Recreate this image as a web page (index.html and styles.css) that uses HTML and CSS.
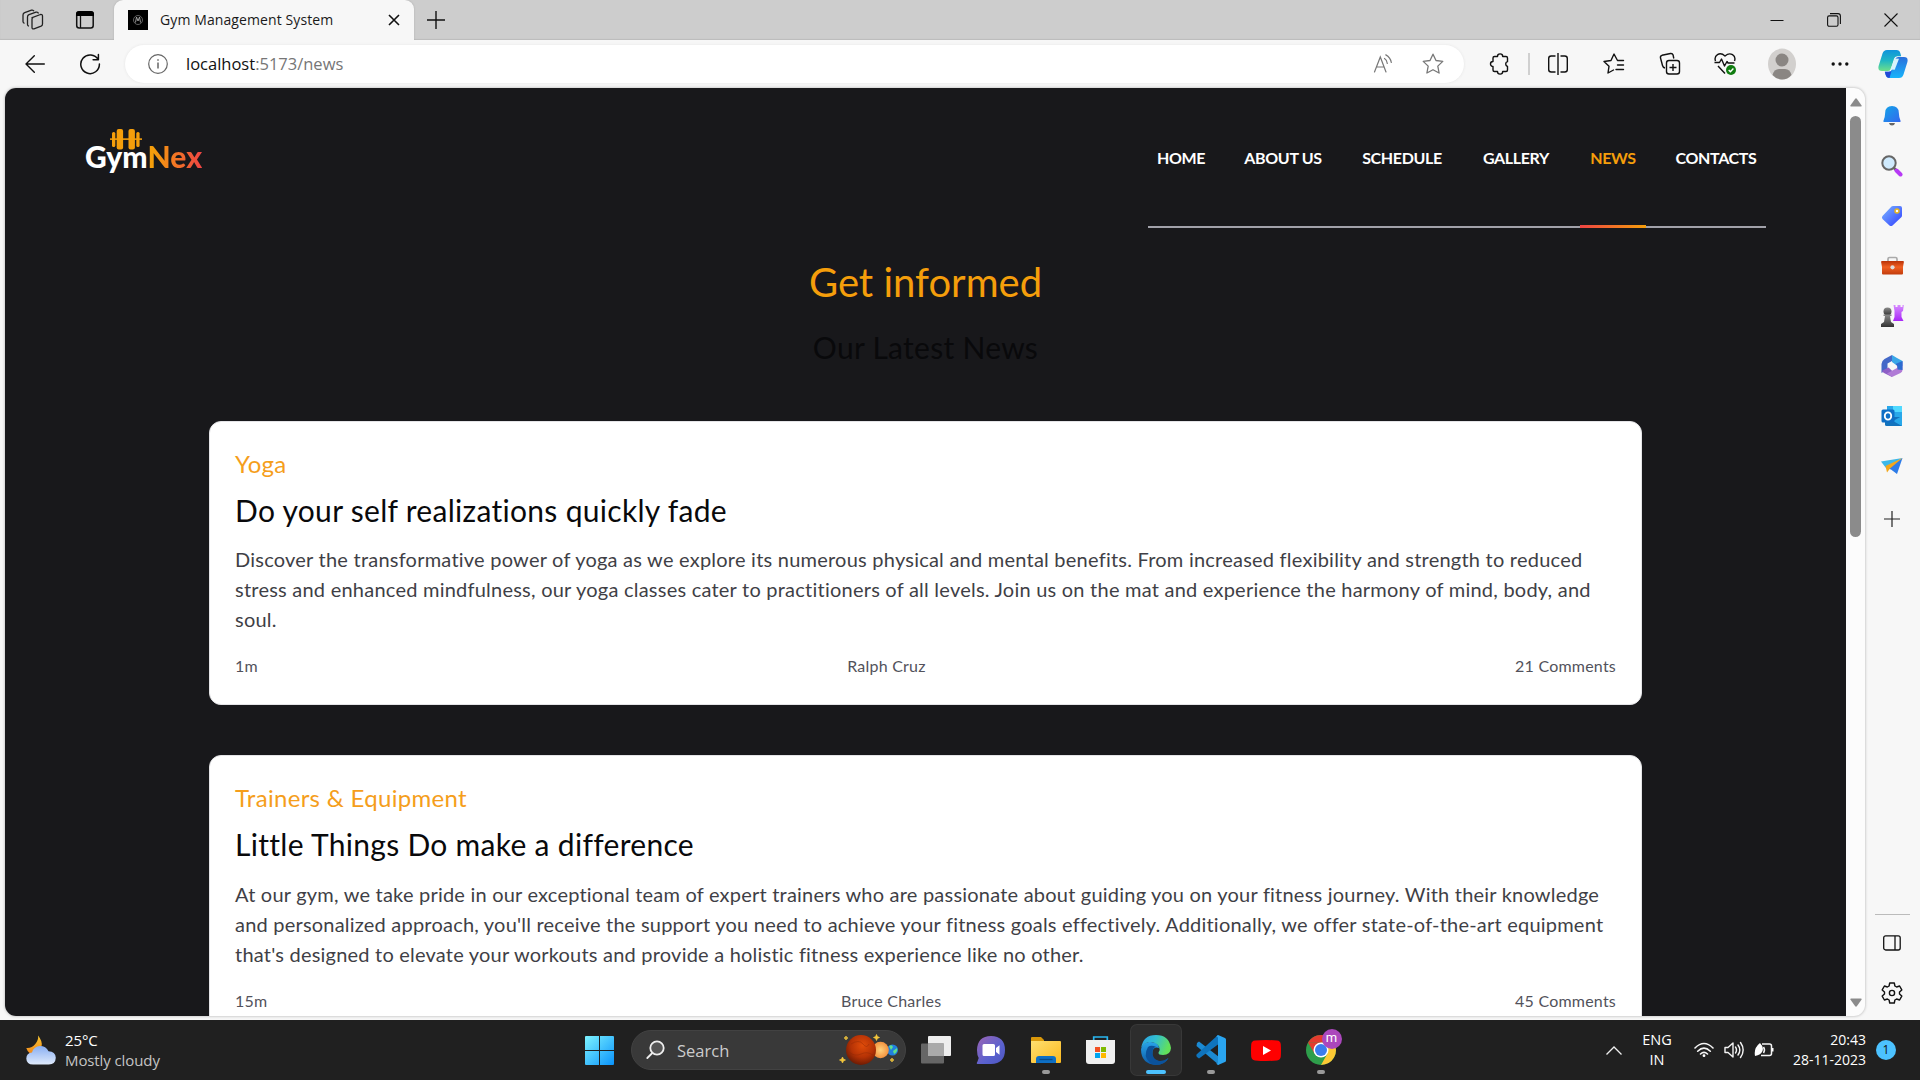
FILE: index.html
```html
<!DOCTYPE html>
<html lang="en">
<head>
<meta charset="utf-8">
<title>Gym Management System</title>
<link rel="stylesheet" href="styles.css">
</head>
<body>
<svg class="defs" width="0" height="0" aria-hidden="true">
  <defs>
    <linearGradient id="blue" x1="0" y1="0" x2="1" y2="1"><stop offset="0" stop-color="#12a5e8"/><stop offset="1" stop-color="#3467ee"/></linearGradient>
    <linearGradient id="win" x1="0" y1="0" x2="1" y2="1"><stop offset="0" stop-color="#7df3ff"/><stop offset="1" stop-color="#0a93fb"/></linearGradient>
    <linearGradient id="tag" x1="0" y1="0" x2="1" y2="1"><stop offset="0" stop-color="#7cb8ff"/><stop offset="1" stop-color="#2f3cff"/></linearGradient>
    <linearGradient id="purple" x1="0" y1="0" x2="0" y2="1"><stop offset="0" stop-color="#d68cff"/><stop offset="1" stop-color="#a826f7"/></linearGradient>
    <linearGradient id="grey" x1="0" y1="0" x2="0" y2="1"><stop offset="0" stop-color="#8b8b8b"/><stop offset="1" stop-color="#333"/></linearGradient>
    <linearGradient id="brick" x1="0" y1="0" x2="0" y2="1"><stop offset="0" stop-color="#b93208"/><stop offset=".45" stop-color="#f06022"/><stop offset="1" stop-color="#c23c0c"/></linearGradient>
    <linearGradient id="teal" x1="0" y1="0" x2="0" y2="1"><stop offset="0" stop-color="#0f93dc"/><stop offset=".5" stop-color="#1fb6c4"/><stop offset="1" stop-color="#6ee08a"/></linearGradient>
    <linearGradient id="azure" x1="0" y1="0" x2="0" y2="1"><stop offset="0" stop-color="#2a6fdb"/><stop offset="1" stop-color="#18b4fb"/></linearGradient>
    <linearGradient id="edgetop" x1="0" y1="0" x2="1" y2=".3"><stop offset="0" stop-color="#2a9fe8"/><stop offset=".5" stop-color="#32bfd0"/><stop offset="1" stop-color="#62e05a"/></linearGradient>
    <linearGradient id="edgebot" x1="0" y1="0" x2="0" y2="1"><stop offset="0" stop-color="#28a4ea"/><stop offset="1" stop-color="#0c59a4"/></linearGradient>
    <linearGradient id="folder" x1="0" y1="0" x2="1" y2="1"><stop offset="0" stop-color="#ffdf70"/><stop offset="1" stop-color="#fbb91e"/></linearGradient>
    <linearGradient id="chat" x1="0" y1="0" x2="1" y2="1"><stop offset="0" stop-color="#9c64b4"/><stop offset=".6" stop-color="#5a62cf"/><stop offset="1" stop-color="#4d55c0"/></linearGradient>
    <linearGradient id="cloud" x1="0" y1="0" x2="0" y2="1"><stop offset="0" stop-color="#88aef2"/><stop offset="1" stop-color="#dfeafb"/></linearGradient>
    <linearGradient id="moon" x1="0" y1="0" x2="0" y2="1"><stop offset="0" stop-color="#f5c431"/><stop offset="1" stop-color="#f28a1c"/></linearGradient>
    <radialGradient id="mars" cx=".55" cy=".35" r=".65"><stop offset="0" stop-color="#e04c0a"/><stop offset=".6" stop-color="#b53205"/><stop offset="1" stop-color="#6e1c04"/></radialGradient>
    <radialGradient id="venus"><stop offset="0" stop-color="#ffd27c"/><stop offset="1" stop-color="#f3913e"/></radialGradient>
  </defs>
</svg>

<div class="browser">
  <header class="titlebar">
    <div class="tb-icon first"><svg width="24" height="24" viewBox="0 0 24 24" fill="none" stroke="#222" stroke-width="1.3" stroke-linejoin="round"><path d="M10.5 9.8 19.5 6.5q2-.3 2 1.6v8q0 1.500-1.400 2.100L13 20.900q-2 .4-2-1.500V11q0-1 1-1.400"/><path d="M17.500 5.500q-.5-1.800-2.500-1.300L8 6.700Q6.500 7.300 6.500 9v7.500q0 1.500 1.500 1.700"/><path d="M13 3.200q-.7-1.500-2.500-1L3.700 4.700Q2 5.300 2 7v6.500Q2 15 3.500 15.300"/></svg></div>
    <div class="tb-icon"><svg width="20" height="20" viewBox="0 0 20 20"><rect x="1.700" y="2" width="16.500" height="16" rx="2.500" fill="none" stroke="#111" stroke-width="1.500"/><path d="M1 6V4q0-3 3-3h12q3 0 3 3v2z" fill="#000"/><path d="M5.500 6v12" stroke="#111" stroke-width="1.300"/></svg></div>
    <div class="tab">
      <svg width="20" height="20" viewBox="0 0 20 20"><path d="M0 0h20v20H0z"/><circle cx="10" cy="10" r="4.500" fill="none" stroke="#777" stroke-width=".8"/><path d="M7.500 12.500 8.500 7l1.500 4 1.500-4 1 5.500" fill="none" stroke="#aaa" stroke-width=".9"/></svg>
      <span class="tab-title">Gym Management System</span>
      <svg class="tab-close" width="12" height="12" viewBox="0 0 12 12" stroke="#111" stroke-width="1.600"><path d="m1 1 10 10M11 1 1 11"/></svg>
    </div>
    <div class="newtab"><svg width="18" height="18" viewBox="0 0 18 18" stroke="#111" stroke-width="1.400"><path d="M9 0v18M0 9h18"/></svg></div>
    <div class="winbtns">
      <svg width="14" height="14" viewBox="0 0 14 14" fill="none" stroke="#111"><path d="M.5 7.500h13"/></svg>
      <svg width="14" height="14" viewBox="0 0 14 14" fill="none" stroke="#111" stroke-width="1.100"><rect x=".6" y="2.900" width="10.400" height="10.400" rx="1.500"/><path d="M3 .6h8q2.400 0 2.400 2.400v8"/></svg>
      <svg width="14" height="14" viewBox="0 0 14 14" fill="none" stroke="#111" stroke-width="1.100"><path d="m.5.5 13 13M13.500.5l-13 13"/></svg>
    </div>
  </header>

  <div class="toolbar">
    <div class="nav-btn"><svg width="20" height="18" viewBox="0 0 20 18" fill="none" stroke="#111" stroke-width="1.400" stroke-linecap="round" stroke-linejoin="round"><path d="M19.300 9H1M9.300.8 1 9l8.300 8.200"/></svg></div>
    <div class="nav-btn reload"><svg width="22" height="22" viewBox="0 0 22 22" fill="none" stroke="#111" stroke-width="1.500" stroke-linecap="round" stroke-linejoin="round"><path d="M19.200 6.700A9.300 9.300 0 1 0 20.400 11M19.400 1.500v5.300h-5.300"/></svg></div>
    <div class="omnibox">
      <svg width="20" height="20" viewBox="0 0 20 20" fill="none" stroke="#666" stroke-width="1.200"><circle cx="10" cy="10" r="9.300"/><path d="M10 8.500v6M10 5.200v1.600" stroke-width="1.500"/></svg>
      <span class="url"><b>localhost</b>:5173/news</span>
      <div class="omni-actions">
        <svg width="20" height="20" viewBox="0 0 20 20" fill="none" stroke="#777" stroke-width="1.200" stroke-linecap="round"><path d="M1.500 18 7.300 3l5.700 15M3.400 13h7.800M11.500 4.500q2.500 1.500 2.800 5M12.800.9q4.700 2.600 5.500 7.600"/></svg>
        <svg width="22" height="22" viewBox="0 0 22 22" fill="none" stroke="#777" stroke-width="1.300" stroke-linejoin="round"><path d="m11 1.200 3 6.300 6.800.9-5 4.700 1.300 6.900L11 16.700 4.900 20l1.300-6.900-5-4.700 6.800-.9z"/></svg>
      </div>
    </div>
    <div class="tools">
      <div class="tool"><svg width="22" height="24" viewBox="0 0 22 24" fill="none" stroke="#111" stroke-width="1.400" stroke-linejoin="round"><path d="M5.500 4.500h3a2.600 2.600 0 0 1 5.200 0H17q1.500 0 1.500 1.500v3.700a2.500 2.500 0 0 0 0 4.800V18q0 1.500-1.500 1.500h-3.300a2.600 2.600 0 0 1-5.200 0h-3Q4 19.500 4 18v-3.500a2.500 2.500 0 0 1 0-5V6q0-1.500 1.500-1.500z"/></svg></div>
      <i class="rule"></i>
      <div class="tool"><svg width="22" height="22" viewBox="0 0 22 22" fill="none" stroke="#111" stroke-width="1.400"><path d="M11 0v22M8.500 3H4.200Q1.700 3 1.700 5.500v11Q1.700 19 4.200 19h4.300M13.500 3h4.300q2.500 0 2.500 2.500v11q0 2.500-2.500 2.500h-4.300"/></svg></div>
      <div class="tool"><svg width="22" height="22" viewBox="0 0 22 22" fill="none" stroke="#111" stroke-width="1.400" stroke-linejoin="round" stroke-linecap="round"><path d="M20.500 7.500h-6L11 1 8 7.500l-7 1 5 4.800L5 20l5.500-3M14.500 12h6M13 16.500h7.500"/></svg></div>
      <div class="tool"><svg width="22" height="24" viewBox="0 0 22 24" fill="none" stroke="#111" stroke-width="1.400"><rect x="7.500" y="8.500" width="13" height="13.500" rx="2.500"/><path d="M14 12v7M10.500 15.500h7M6 16q-2-.4-2.500-2.500L1.500 6Q1 4 3 3.300L11.500 1.500q2-.3 2.600 1.500l.7 3.500"/></svg></div>
      <div class="tool heart"><svg width="24" height="24" viewBox="0 0 24 24" fill="none" stroke="#111" stroke-width="1.400" stroke-linejoin="round"><path d="M2.500 9Q1 5 4.500 2.700T12 4q4-3.500 7.500-1.300T21.500 9M1.500 10.500h5l2-3.500 3 7 2.500-4.500 1 1.500h6.500M5 14l7 7.500"/><circle cx="18" cy="18" r="5" fill="#107c10" stroke="none"/><path d="m15.700 18 1.700 1.700 3-3.200" stroke="#fff"/></svg></div>
      <div class="tool avatar"><svg width="28" height="32" viewBox="0 0 28 32"><ellipse cx="14" cy="16" rx="14" ry="15.500" fill="#d2d0ce"/><circle cx="14" cy="12" r="6.500" fill="#8a8683"/><path d="M4.500 27q1.500-6 6.500-6h6q5 0 6.500 6-4 4.500-9.500 4.500T4.500 27z" fill="#8a8683"/></svg></div>
      <div class="tool"><svg width="18" height="4" viewBox="0 0 18 4" fill="#111"><circle cx="2.200" cy="2" r="1.700"/><circle cx="9" cy="2" r="1.700"/><circle cx="15.800" cy="2" r="1.700"/></svg></div>
      <div class="tool copilot"><svg width="30" height="30" viewBox="0 0 30 30"><path d="M9 1h9.500q3 0 3.800 3l.9 3.300h-4q-2.500 0-3.200 2.500L13 19.500Q12.200 22 10 22H4Q-.5 22 .6 17L4.500 4.500Q5.600 1 9 1z" fill="url(#teal)"/><path d="M21 29h-9.500q-3 0-3.800-3l-.9-3.300h4q2.500 0 3.200-2.500l3-9.700Q17.800 8 20 8h6q4.500 0 3.400 5l-3.900 12.500Q24.400 29 21 29z" fill="url(#azure)"/><path d="M6.800 22.700h4q2 0 2.900-1.500L11.500 29q-3 0-3.800-3z" fill="#2249d6"/><path d="m17 9.500 4 .2-4.300 11-4.400-.2z" fill="#d7f3fb"/></svg></div>
    </div>
  </div>

  <div class="workspace">
    <div class="viewport">
      <main class="page">
        <div class="site-head">
          <div class="logo">
            <svg width="32" height="22" viewBox="0 0 32 22" fill="#f59e0b"><path d="M0 9.300h32v1.800H0z" opacity=".9"/><rect x="2" y="3" width="3.300" height="15" rx="1.500"/><rect x="6.700" y="0" width="6.400" height="20.500" rx="2"/><rect x="18.500" y="0" width="6.400" height="20.500" rx="2"/><rect x="26.300" y="3" width="3.300" height="15" rx="1.500"/></svg>
            <div class="wordmark"><span>Gym</span><span class="nex">Nex</span></div>
          </div>
          <nav class="menu">
            <a class="w66">HOME</a><a class="w98">ABOUT US</a><a class="w100">SCHEDULE</a><a class="w88">GALLERY</a><a class="w66 active">NEWS</a><a class="w100">CONTACTS</a>
          </nav>
        </div>
        <h1>Get informed</h1>
        <h2>Our Latest News</h2>
        <article class="card">
          <h3>Yoga</h3>
          <h4>Do your self realizations quickly fade</h4>
          <p>Discover the transformative power of yoga as we explore its numerous physical and mental benefits. From increased flexibility and strength to reduced<br>stress and enhanced mindfulness, our yoga classes cater to practitioners of all levels. Join us on the mat and experience the harmony of mind, body, and<br>soul.</p>
          <footer><span>1m</span><span>Ralph Cruz</span><span>21 Comments</span></footer>
        </article>
        <article class="card">
          <h3>Trainers &amp; Equipment</h3>
          <h4>Little Things Do make a difference</h4>
          <p>At our gym, we take pride in our exceptional team of expert trainers who are passionate about guiding you on your fitness journey. With their knowledge<br>and personalized approach, you'll receive the support you need to achieve your fitness goals effectively. Additionally, we offer state-of-the-art equipment<br>that's designed to elevate your workouts and provide a holistic fitness experience like no other.</p>
          <footer><span>15m</span><span>Bruce Charles</span><span>45 Comments</span></footer>
        </article>
      </main>
      <div class="scrollbar">
        <svg width="12" height="9" viewBox="0 0 12 9"><path d="M6 .3Q6.500.3 7 1l4.600 6.500q.5 1-.6 1H1q-1.100 0-.6-1L5 1Q5.500.3 6 .3z" fill="#8b8b8b"/></svg>
        <i class="thumb"></i>
        <svg class="down" width="12" height="9" viewBox="0 0 12 9"><path d="M6 8.700Q6.500 8.700 7 8l4.600-6.500q.5-1-.6-1H1Q-.1.500.4 1.500L5 8q.5.700 1 .7z" fill="#8b8b8b"/></svg>
      </div>
    </div>
    <aside class="sidebar">
      <div class="side"><svg width="20" height="22" viewBox="0 0 20 22"><path d="M10 1q6.500 0 6.800 6.500.2 5.500 1.800 8.500.3 1-.7 1H2.100q-1 0-.7-1Q3 13 3.200 7.500 3.500 1 10 1z" fill="url(#blue)"/><path d="M7 18h6q-.5 2.500-3 2.500T7 18z" fill="#666"/></svg></div>
      <div class="side"><svg width="22" height="22" viewBox="0 0 22 22"><path d="m12.500 12.500 3 3" stroke="#666" stroke-width="2.500"/><circle cx="8" cy="8" r="6.700" fill="#cfeafd" stroke="#666" stroke-width="2"/><path d="m15.500 15.500 4 4" stroke="#b739f5" stroke-width="4" stroke-linecap="round"/></svg></div>
      <div class="side"><svg width="22" height="22" viewBox="0 0 22 22"><path d="M12 1h7q2 0 2 2v7.500q0 1-.7 1.700L11.500 20.500q-1.500 1.200-3 0l-7-6.500q-1.200-1.500 0-3L10.500 1.600Q11 1 12 1z" fill="url(#tag)"/><circle cx="16" cy="6" r="2" fill="#fff" stroke="#e8b51e" stroke-width="1.500"/></svg></div>
      <div class="side"><svg width="23" height="20" viewBox="0 0 23 20"><path d="M7 6V3q0-1.500 1.500-1.500h6Q16 1.500 16 3v3" fill="none" stroke="#aaa" stroke-width="1.700"/><path d="M1 5h21q1 0 .9 1L22 11v6.500q0 1-1 1H2q-1 0-1-1V11L.1 6Q0 5 1 5z" fill="url(#brick)"/><circle cx="11.500" cy="11.300" r="2.100" fill="#ddd"/></svg></div>
      <div class="side"><svg width="24" height="24" viewBox="0 0 24 24"><path d="M13.500 1h2v2h2V1h3v2h2V1h1.300l-.8 6-1.500 1v5l2 4H13l1.500-4V7z" fill="url(#purple)"/><circle cx="7.500" cy="7.500" r="4" fill="url(#grey)"/><path d="M3.500 10.500h8v1.500H10l1 6 3 2v3H1v-3l3-2 1-6H3.500z" fill="url(#grey)"/></svg></div>
      <div class="side"><svg width="22" height="24" viewBox="0 0 22 24"><path d="m11 1 5 3 5.500 3v5l-7-1.500L11 8z" fill="#3aa7e8"/><path d="M11 1 3.500 5Q.5 7 .5 10v9l6-4V9.500L11 7z" fill="#4368c8"/><path d="m.5 17 7-3.500 3.500 3.300V23L3 18.900z" fill="#8e5fc6"/><path d="M21.500 8v8q0 2-2 3L11 23l-5-3.500 5-2.700 5-2.800v-4.500z" fill="#b07bd6"/><path d="m21.500 7-7 3 2 2.500v3l5 .5z" fill="#2c6cd0"/></svg></div>
      <div class="side"><svg width="22" height="22" viewBox="0 0 22 22"><path d="M6 1h15v13H6z" fill="#29a8ea"/><path d="M12 1h9v6h-9z" fill="#50d9ff"/><path d="M4 12h17v9H5.500Q4 21 4 19.500z" fill="#1273bd"/><path d="m21 11-9 5 9 5z" fill="#28a8ea"/><rect x=".5" y="4.500" width="13" height="13" rx="1.500" fill="#0f6fc6"/><ellipse cx="7" cy="11" rx="3.200" ry="3.600" fill="none" stroke="#fff" stroke-width="1.900"/></svg></div>
      <div class="side"><svg width="22" height="18" viewBox="0 0 22 18"><path d="M0 4.500 21.500 1 5 11z" fill="#3bb8e9"/><path d="m5 11 16.500-10L16 17l-6-4.500z" fill="#2d7ce8"/><path d="M4.500 9 21.500 1 9 11.500 6 15.500z" fill="#f2a71b"/></svg></div>
      <div class="side plus"><svg width="16" height="16" viewBox="0 0 16 16" stroke="#222" stroke-width="1.200"><path d="M8 0v16M0 8h16"/></svg></div>
      <i class="side-rule"></i>
      <div class="side"><svg width="18" height="16" viewBox="0 0 18 16" fill="none" stroke="#111" stroke-width="1.300"><rect x=".7" y=".8" width="16.500" height="14.200" rx="2"/><path d="M12 1v14"/></svg></div>
      <div class="side"><svg width="22" height="22" viewBox="0 0 22 22" fill="none" stroke="#111" stroke-width="1.400" stroke-linejoin="round"><path d="M8.700 1h4.600l.6 3 1.700 1 3-1 2.200 3.900L18.500 10v2l2.300 2.100-2.200 3.900-3-1-1.700 1-.6 3H8.700l-.6-3-1.700-1-3 1-2.200-3.900L3.500 12v-2L1.200 7.900 3.400 4l3 1 1.700-1z"/><circle cx="11" cy="11" r="2.600"/></svg></div>
    </aside>
  </div>
</div>

<div class="taskbar">
  <div class="weather">
    <svg width="30" height="30" viewBox="0 0 30 30"><path d="M12 .5q5 6 3.500 11T4 18.500Q1.500 17 .3 13q5.500.5 9-4T12 .5z" fill="url(#moon)"/><path d="M7 29.500q-6.500 0-6.700-6Q.5 18 6 17.500 8 11 14 11t8.500 5.300q7 .2 7.300 6.500-.3 6.700-7 6.700z" fill="url(#cloud)"/></svg>
    <div class="weather-text"><span>25°C</span><span class="dim">Mostly cloudy</span></div>
  </div>
  <div class="start"><svg width="29" height="29" viewBox="0 0 29 29" fill="url(#win)"><path d="M1 0h13v14H0V1q0-1 1-1zM15 0h13q1 0 1 1v13H15zM0 15h14v14H1q-1 0-1-1zM15 15h14v13q0 1-1 1H15z"/></svg></div>
  <div class="search">
    <svg width="19" height="20" viewBox="0 0 19 20" fill="#555" stroke="#eee" stroke-width="1.800" stroke-linecap="round"><circle cx="11" cy="8" r="6.700"/><path d="m6.300 13-5 5"/></svg>
    <span>Search</span>
    <svg class="planets" width="60" height="32" viewBox="0 0 60 32"><circle cx="53.500" cy="16" r="5.500" fill="#2080e0"/><path d="M50 12q3-2 4 1l-2 3zM54 17l4-3q1 4-3 6z" fill="#5fe08c"/><circle cx="41.500" cy="16" r="8.300" fill="url(#venus)"/><circle cx="22" cy="16" r="15" fill="url(#mars)"/><path d="M12 10q8-5 12 0t6 0M10 18q6 5 12 2t12 1" fill="none" stroke="#8d2806" opacity=".4"/><path d="m3.500 23 .9 2.100 2.100.9-2.100.9-.9 2.100-.9-2.100L.5 26l2.100-.9zM7 2l.6 1.400L9 4l-1.400.6L7 6l-.6-1.400L5 4l1.400-.6zM37.500.5l.9 2.100 2.100.9-2.100.9-.9 2.100-.9-2.100-2.100-.9 2.100-.9zM53 24l.6 1.400L55 26l-1.400.6L53 28l-.6-1.400L51 26l1.400-.6z" fill="#f4c73c" stroke="#f4c73c" stroke-width=".7"/></svg>
  </div>
  <div class="apps">
    <div class="app"><svg width="30" height="30" viewBox="0 0 30 30"><rect x="7" y="1" width="23" height="20" rx="1" fill="#eee"/><rect x="0" y="8.500" width="23" height="20" rx="1" fill="#666"/><path d="M7 8.500h16V21H7z" fill="#aaa"/></svg></div>
    <div class="app"><svg width="30" height="30" viewBox="0 0 30 30"><path d="M15 1q14 .5 14 14T15 29H1.500q-1.500-.5 0-2.500L2.700 23Q1 20 1 15 1.500 1 15 1z" fill="url(#chat)"/><path d="M8 9h9.500q1.500 0 1.500 1.500v9q0 1.500-1.500 1.500H8q-1.500 0-1.500-1.500v-9Q6.500 9 8 9zM20 13l3.500-2.800v9.600L20 17z" fill="#fff"/></svg></div>
    <div class="app"><svg width="30" height="28" viewBox="0 0 30 28"><path d="M0 2Q0 1 1 1h9l3 3v8H0z" fill="#d9980a"/><path d="M0 5h29q1 0 1 1v20q0 1-1 1H1q-1 0-1-1z" fill="url(#folder)"/><path d="M5 27v-4q0-3 3-3h14q3 0 3 3v4z" fill="#0e6fc4"/><path d="M8.500 23.500h13" stroke="#084b8a" stroke-width="1.300"/></svg><i></i></div>
    <div class="app"><svg width="29" height="30" viewBox="0 0 29 30"><path d="M7.700 7V2h13.600v5" fill="none" stroke="#29b6f0" stroke-width="1.700"/><path d="M0 5h29v21q0 3-3 3H3q-3 0-3-3z" fill="#f0f0f0"/><path d="M9 12h5v5H9z" fill="#f25022"/><path d="M15 12h5v5h-5z" fill="#7fba00"/><path d="M9 18h5v5H9z" fill="#00a4ef"/><path d="M15 18h5v5h-5z" fill="#ffb900"/></svg></div>
    <div class="app current"><svg width="30" height="30" viewBox="0 0 30 30"><path d="M0 14Q1.500 8 8 7q10-.5 10 6-5-2-6.500 3-1.500 8 6 10.300 5 1 10-3.300Q23.500 30 15 30 0 29 0 14z" fill="url(#edgebot)"/><path d="M7 12Q1.500 21 9 28q3 2 6 2 8.500 0 12.500-7-5 3.800-10 2.800-6.500-2-6-9 .5-4 3.500-5Q10 9.500 7 12z" fill="#0b529b"/><path d="M.2 13Q2 0 15 0t15 13q-.5 7-8 7-5 0-4.500-2.500 2-3 .5-6Q15.500 7 9 7 3 7.500.2 13z" fill="url(#edgetop)"/></svg><i></i></div>
    <div class="app"><svg width="30" height="30" viewBox="0 0 30 30"><path d="m1 8 2-1.500L23 22v8L.5 11z" fill="#1b8ad3"/><path d="M.5 19.500 22 0l2 8L3 23.500 1 22q-1-1-.5-2.500z" fill="#0f74bd"/><path d="m22 0 7 3q1 .5 1 1.500v21q0 1-1 1.500l-7 3-2-1.500q2 .5 2-1.500V3q0-2-2-1.500z" fill="#2aa5f0"/></svg><i></i></div>
    <div class="app"><svg width="30" height="21" viewBox="0 0 30 21"><path d="M4 .5Q15-.5 26 .5q3.500.3 3.800 4 .4 6 0 12-.3 3.600-3.800 4-11 1-22 0-3.500-.4-3.800-4-.4-6 0-12Q.5.800 4 .5z" fill="#f00"/><path d="m12 6 8 4.500-8 4.500z" fill="#fff"/></svg></div>
    <div class="app"><svg width="30" height="30" viewBox="0 0 30 30"><circle cx="15" cy="15" r="15" fill="#2e9e4b"/><path d="M2 7.500Q6.500 0 15 0t13 7.500H15z" fill="#e33b2e"/><path d="M28 7.500q4 8 0 15T15 30l6.500-11.500v-7L15 7.500z" fill="#fcc934"/><path d="m2 7.500 6.500 11L15 15V7.500z" fill="#e33b2e"/><circle cx="15" cy="15" r="7.500" fill="#fff"/><circle cx="15" cy="15" r="6" fill="#3b7ded"/></svg><b class="profile">m</b><i></i></div>
  </div>
  <div class="tray">
    <svg width="16" height="9" viewBox="0 0 16 9" fill="none" stroke="#eee" stroke-width="1.300"><path d="m.5 8.500 7.500-7.500 7.500 7.500"/></svg>
    <div class="lang"><span>ENG</span><span>IN</span></div>
    <div class="status">
      <svg width="20" height="16" viewBox="0 0 20 16" fill="none" stroke="#f4f4f4" stroke-width="1.600" stroke-linecap="round"><path d="M1 6q9-9 18 0M3.700 9.200q6.300-6.200 12.600 0M6.500 12q3.500-3.300 7 0"/><circle cx="10" cy="13.700" r="1.400" fill="#fff" stroke="none"/></svg>
      <svg width="20" height="18" viewBox="0 0 20 18" fill="none" stroke="#f4f4f4" stroke-width="1.400" stroke-linecap="round" stroke-linejoin="round"><path d="M1 6.500h3L9 2v14l-5-4.500H1zM11.500 6q2 3 0 6M14 4q3.700 5 0 10M16.500 1.500q5.300 7.500 0 15"/></svg>
      <svg width="20" height="16" viewBox="0 0 20 16" fill="none" stroke="#f4f4f4" stroke-width="1.500"><path d="M8 2h7.500Q17.500 2 17.500 4v7.500q0 2-2 2H7"/><path d="M1 14Q-.5 6 6 1q4 4 2.500 8T1 14zM18 6h1.500v3.500H18z" fill="#fff" stroke="none"/><path d="M9.500 5q2 3 0 6"/></svg>
    </div>
    <div class="clock"><span>20:43</span><span>28-11-2023</span></div>
    <div class="count">1</div>
  </div>
</div>
</body>
</html>
```
FILE: styles.css
```css
* { box-sizing: border-box; }
body { margin: 0; width: 1920px; height: 1080px; overflow: hidden; background: #f7f7f7; font-family: "Open Sans", "Noto Sans", sans-serif; }
svg { display: block; flex: none; }
.defs { position: absolute; }
.browser { height: 1020px; display: flex; flex-direction: column; }

/* Title bar */
.titlebar { height: 40px; display: flex; background: #cdcdcd; box-shadow: inset 0 -1px 1px #bcbcbc; }
.tb-icon { width: 50px; display: flex; align-items: center; justify-content: center; }
.tb-icon.first { width: 60px; padding-left: 5px; }
.tab { width: 300px; margin-left: 4px; padding: 0 14px; display: flex; align-items: center; background: #f7f7f7; border-radius: 9px 9px 0 0; box-shadow: 0 0 2px #aaa; clip-path: inset(-2px -3px 0 -3px); }
.tab-title { margin: -1px 0 0 12px; font-size: 14px; letter-spacing: .1px; color: #1a1a1a; white-space: nowrap; }
.tab-close { margin-left: auto; }
.newtab { width: 44px; padding-bottom: 1px; display: flex; align-items: center; justify-content: center; }
.winbtns { margin-left: auto; padding-right: 22px; display: flex; align-items: center; gap: 43px; }

/* Toolbar */
.toolbar { height: 48px; display: flex; align-items: center; background: #f7f7f7; }
.nav-btn { width: 70px; display: flex; justify-content: center; }
.nav-btn.reload { width: 40px; }
.omnibox { width: 1339px; height: 38px; margin-left: 15px; padding: 0 20px 0 23px; display: flex; align-items: center; background: #fff; border-radius: 19px; box-shadow: 0 0 3px #e4e4e4; }
.url { margin: -1px 0 0 18px; font-size: 16.500px; color: #767676; white-space: nowrap; }
.url b { font-weight: 400; color: #111; }
.omni-actions { margin-left: auto; display: flex; align-items: center; gap: 29px; }
.tools { flex: 1; margin-left: 8px; display: flex; align-items: center; }
.tool { flex: none; width: 56px; display: flex; justify-content: center; }
.tool.heart { width: 54px; }
.tool.avatar { width: 60px; }
.tool.copilot { width: 50px; }
.rule { width: 2px; height: 22px; background: #d0d0d0; }

/* Web page area */
.workspace { flex: 1; display: flex; }
.viewport { width: 1860px; height: 928px; margin-left: 5px; display: flex; overflow: hidden; border-radius: 11px; background: #fcfcfc; box-shadow: 0 0 3px #aaa; }
.page { width: 1841px; height: 928px; overflow: hidden; background: #18181b; font-family: Lato, "Noto Sans", sans-serif; text-align: center; }
.site-head { height: 140px; padding: 0 80px 0 80px; display: flex; justify-content: space-between; }
.logo { padding-top: 41px; }
.logo > svg { margin-left: 25px; }
.wordmark { margin-top: -13px; font-size: 30px; line-height: 36px; font-weight: 900; letter-spacing: 0; color: #fff; text-align: left; }
.nex { color: transparent; letter-spacing: .1px; background: linear-gradient(90deg, #f59e0b 10%, #ef4444); -webkit-background-clip: text; background-clip: text; }
.menu { height: 140px; display: flex; gap: 20px; border-bottom: 2px solid #a1a1aa; }
.menu a { height: 140px; padding-top: 58px; font-size: 16px; line-height: 24px; font-weight: 700; letter-spacing: -.35px; color: #fff; white-space: nowrap; }
.w66 { width: 66px; }
.w88 { width: 88px; }
.w98 { width: 98px; }
.w100 { width: 100px; }
.menu .active { color: #f59e0b; background: linear-gradient(90deg, #ef4444, #f59e0b) bottom / 100% 3px no-repeat; }
h1, h2, h3, h4, p { margin: 0; font-weight: 400; }
h1 { margin-top: 30px; font-size: 40px; line-height: 48px; letter-spacing: 0; color: #f59e0b; }
h2 { margin-top: 23px; font-size: 30px; line-height: 36px; letter-spacing: .28px; color: #09090b; }
.card { width: 1433px; height: 284px; margin: 56px 0 50px 204px; padding: 25px; background: #fff; border: 1px solid #e4e4e7; border-radius: 12px; text-align: left; }
.card + .card { margin-top: 0; }
h3 { font-size: 24px; line-height: 34px; letter-spacing: .3px; color: #f59e1b; }
h4 { margin-top: 5px; font-size: 30px; line-height: 48px; letter-spacing: .3px; color: #09090b; }
.card p { margin-top: 10px; font-size: 20px; line-height: 30px; letter-spacing: .23px; color: #3f3f46; white-space: nowrap; }
.card + .card p { margin-top: 11px; letter-spacing: .212px; }
.card footer { margin-top: 20px; display: flex; justify-content: space-between; font-size: 16px; line-height: 24px; letter-spacing: .22px; color: #52525b; }
.scrollbar { width: 19px; padding: 10px 0 9px; display: flex; flex-direction: column; align-items: center; }
.thumb { width: 11px; height: 421px; margin-top: 9px; border-radius: 6px; background: #8b8b8b; }
.down { margin-top: auto; }

/* Edge sidebar */
.sidebar { width: 55px; height: 932px; padding: 3px 1px 0 0; display: flex; flex-direction: column; align-items: center; }
.side { height: 50px; display: flex; align-items: center; justify-content: center; }
.side.plus { height: 56px; }
.side-rule { width: 35px; height: 1px; margin: auto 0 3px; background: #bbb; }
.sidebar .side:last-child { margin-bottom: 2px; }

/* Taskbar */
.taskbar { height: 60px; display: flex; align-items: center; background: #202020; color: #fff; font-size: 15px; }
.weather { width: 571px; padding-left: 26px; display: flex; align-items: center; gap: 9px; }
.weather-text { display: flex; flex-direction: column; line-height: 20px; letter-spacing: -.1px; }
.dim { color: #c4c4c4; }
.start { width: 60px; padding-left: 14px; }
.search { width: 275px; height: 40px; padding: 0 8px 0 14px; display: flex; align-items: center; border: 1px solid #424242; border-radius: 20px; background: #393939; font-size: 16.500px; color: #ccc; }
.search span { margin-left: 12px; }
.planets { margin-left: auto; margin-right: -2px; }
.apps { margin-left: 2px; display: flex; }
.app { position: relative; width: 50px; height: 50px; margin: 0 2.500px; display: flex; align-items: center; justify-content: center; border-radius: 6px; }
.app i { position: absolute; bottom: 1px; left: 21px; width: 8px; height: 4px; border-radius: 2px; background: #999; }
.app.current { background: #2d2d2d; box-shadow: 0 0 0 1px #383838; }
.app.current i { left: 15px; width: 20px; background: #4cc2ff; }
.profile { position: absolute; left: 26px; top: 4px; width: 20px; height: 20px; border-radius: 50%; background: #ab47bc; font: 400 13px/18px Roboto, sans-serif; text-align: center; }
.tray { margin-left: auto; padding-right: 24px; display: flex; align-items: center; }
.lang { width: 60px; margin-left: 5px; font-size: 14.500px; line-height: 20px; display: flex; flex-direction: column; align-items: center; }
.status { margin-left: 7px; display: flex; align-items: center; gap: 10px; }
.clock { width: 92px; font-size: 14px; line-height: 20px; display: flex; flex-direction: column; align-items: flex-end; }
.count { width: 20px; height: 20px; margin-left: 10px; border-radius: 50%; background: #4cc2ff; color: #111; font-size: 12px; line-height: 20px; text-align: center; }
```
